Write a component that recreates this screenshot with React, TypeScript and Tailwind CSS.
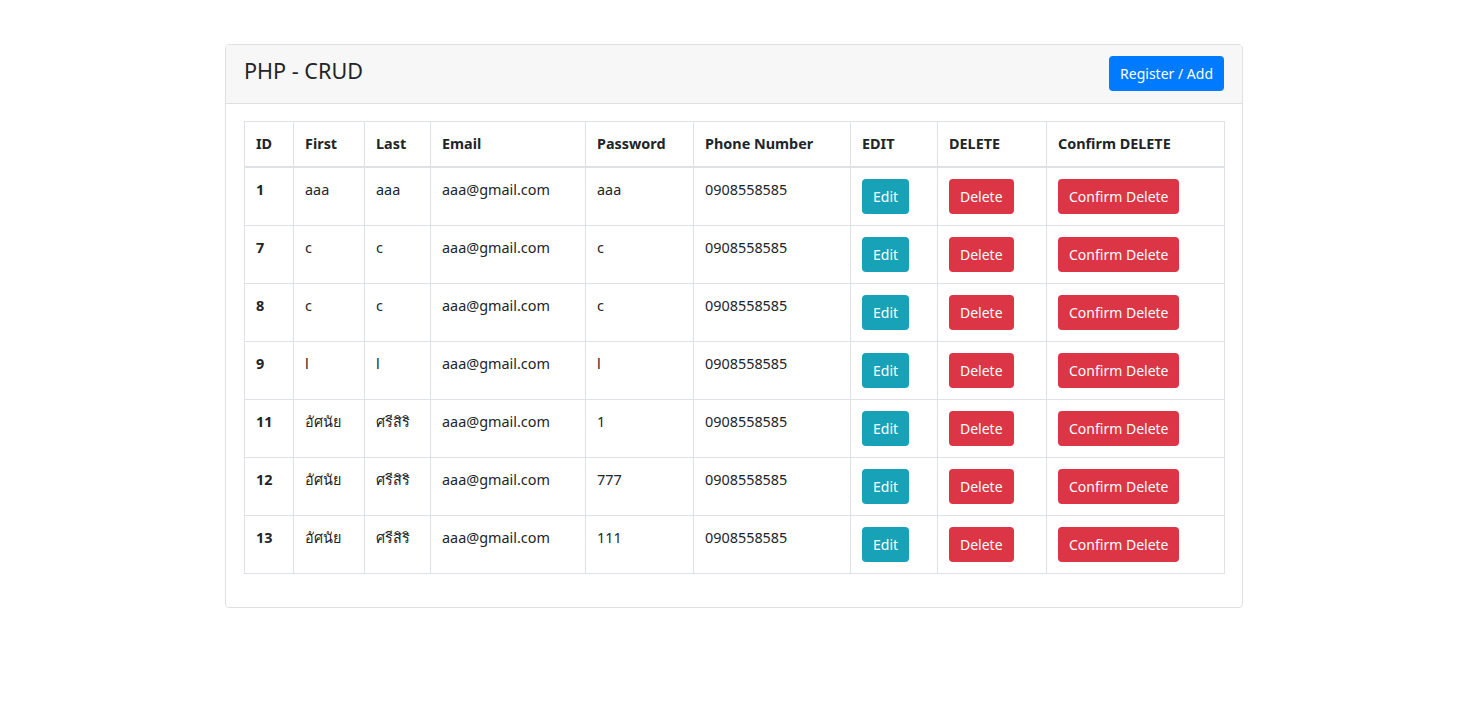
const rows = [
  { id: 1, first: "aaa", last: "aaa", email: "aaa@gmail.com", password: "aaa", phone: "0908558585" },
  { id: 7, first: "c", last: "c", email: "aaa@gmail.com", password: "c", phone: "0908558585" },
  { id: 8, first: "c", last: "c", email: "aaa@gmail.com", password: "c", phone: "0908558585" },
  { id: 9, first: "l", last: "l", email: "aaa@gmail.com", password: "l", phone: "0908558585" },
  { id: 11, first: "อัศนัย", last: "ศรีสิริ", email: "aaa@gmail.com", password: "1", phone: "0908558585" },
  { id: 12, first: "อัศนัย", last: "ศรีสิริ", email: "aaa@gmail.com", password: "777", phone: "0908558585" },
  { id: 13, first: "อัศนัย", last: "ศรีสิริ", email: "aaa@gmail.com", password: "111", phone: "0908558585" },
];

const columns = [
  { label: "ID", w: "w-[49px]" },
  { label: "First", w: "w-[71px]" },
  { label: "Last", w: "w-[66px]" },
  { label: "Email", w: "w-[155px]" },
  { label: "Password", w: "w-[108px]" },
  { label: "Phone Number", w: "w-[157px]" },
  { label: "EDIT", w: "w-[87px]" },
  { label: "DELETE", w: "w-[109px]" },
  { label: "Confirm DELETE", w: "w-[178px]" },
];

const btn = "inline-block h-[35px] px-[11px] rounded-[4px] text-white text-[14px] leading-[35px]";
const td = "border border-[#dee2e6] px-[11px] py-[11px] align-top h-[58px]";

export default function App() {
  return (
    <div
      className="min-h-screen bg-white text-[#212529] pt-[44px]"
      style={{ fontFamily: '"Noto Sans", "Open Sans", sans-serif' }}
    >
      <div className="mx-auto w-[1018px] border border-[#e0e0e0] rounded-[4px]">
        {/* card header */}
        <div className="flex justify-between h-[59px] pl-[18px] pr-[18px] pt-[11px] bg-[#f7f7f7] border-b border-[#e0e0e0]">
          <h3 className="text-[21.6px] leading-[30px]">PHP - CRUD</h3>
          <button className="h-[35px] px-[11px] rounded-[4px] bg-[#007bff] text-white text-[14px]">
            Register / Add
          </button>
        </div>

        {/* card body */}
        <div className="px-[18px] pt-[17px] pb-[33px]">
          <table className="w-[980px] table-fixed border-collapse text-[14.4px] leading-[21.6px]">
            <thead>
              <tr>
                {columns.map((c) => (
                  <th
                    key={c.label}
                    className={`${c.w} border border-[#dee2e6] border-b-2 px-[11px] py-[11px] text-left font-bold`}
                  >
                    {c.label}
                  </th>
                ))}
              </tr>
            </thead>
            <tbody>
              {rows.map((r) => (
                <tr key={r.id}>
                  <td className={`${td} font-bold`}>{r.id}</td>
                  <td className={td}>{r.first}</td>
                  <td className={td}>{r.last}</td>
                  <td className={td}>{r.email}</td>
                  <td className={td}>{r.password}</td>
                  <td className={td}>{r.phone}</td>
                  <td className={td}>
                    <span className={`${btn} bg-[#17a2b8]`}>Edit</span>
                  </td>
                  <td className={td}>
                    <span className={`${btn} bg-[#dc3545]`}>Delete</span>
                  </td>
                  <td className={td}>
                    <span className={`${btn} bg-[#dc3545]`}>Confirm Delete</span>
                  </td>
                </tr>
              ))}
            </tbody>
          </table>
        </div>
      </div>
    </div>
  );
}
